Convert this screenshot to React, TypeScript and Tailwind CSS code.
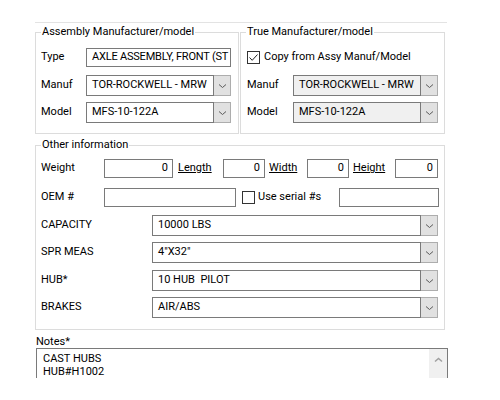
import React from "react";

const font = { fontFamily: "Roboto, 'Liberation Sans', sans-serif" };

function Chevron() {
  return (
    <svg width="9" height="6" viewBox="0 0 9 6" fill="none">
      <path d="M1 1.5 L4.5 4.5 L8 1.5" stroke="#5a5a5a" strokeWidth="1" />
    </svg>
  );
}

function TextBox({
  w,
  value = "",
  right = false,
}: {
  w: string;
  value?: string;
  right?: boolean;
}) {
  return (
    <div
      className={`${w} h-[19px] border border-[#7a7a7a] bg-white flex items-center pl-[5px] pr-[4px] overflow-hidden whitespace-pre ${
        right ? "justify-end" : ""
      }`}
    >
      {value}
    </div>
  );
}

function Combo({
  w,
  value,
  disabled = false,
}: {
  w: string;
  value: string;
  disabled?: boolean;
}) {
  return (
    <div className={`${w} h-[21px] flex`}>
      <div
        className={`flex-1 border border-[#7a7a7a] flex items-center pl-[5px] overflow-hidden whitespace-pre ${
          disabled ? "bg-[#f0f0f0]" : "bg-white"
        }`}
      >
        {value}
      </div>
      <div className="w-[17px] border border-l-0 border-[#adadad] bg-[#e1e1e1] flex items-center justify-center">
        <Chevron />
      </div>
    </div>
  );
}

function CheckBox({ checked = false }: { checked?: boolean }) {
  return (
    <div className="w-[13px] h-[13px] border border-[#333333] bg-white flex items-center justify-center">
      {checked && (
        <svg width="11" height="11" viewBox="0 0 11 11" fill="none">
          <path d="M1.5 5.5 L4.2 8.3 L9.5 2.5" stroke="#222" strokeWidth="1" />
        </svg>
      )}
    </div>
  );
}

function Legend({ text }: { text: string }) {
  return <legend className="ml-[5px] px-[1px] leading-[16px]">{text}</legend>;
}

export default function App() {
  const combos = [
    { label: "CAPACITY", value: "10000 LBS", mt: "mt-[8px]" },
    { label: "SPR MEAS", value: '4"X32"', mt: "mt-[6px]" },
    { label: "HUB*", value: "10 HUB  PILOT", mt: "mt-[7px]" },
    { label: "BRAKES", value: "AIR/ABS", mt: "mt-[6px]" },
  ];

  return (
    <div className="w-[500px] h-[400px] bg-white overflow-hidden text-[11px] text-black" style={font}>
      <div className="ml-[35px] mt-[22px] w-[412px] border-t border-[#e3e3e3]">
        <div className="mt-[1px] flex gap-[1px]">
          {/* Assembly manufacturer */}
          <fieldset className="w-[204px] border border-[#dcdcdc] pb-[10px]">
            <Legend text="Assembly Manufacturer/model" />
            <div className="mt-[8px] flex items-center">
              <span className="w-[50px] pl-[5px]">Type</span>
              <div className="w-[145px] h-[19px] border border-[#7a7a7a] bg-white flex items-center pl-[5px] whitespace-nowrap tracking-[-0.2px]">
                AXLE ASSEMBLY, FRONT (ST
              </div>
            </div>
            <div className="mt-[8px] flex items-center">
              <span className="w-[50px] pl-[5px]">Manuf</span>
              <Combo w="w-[145px]" value="TOR-ROCKWELL - MRW" />
            </div>
            <div className="mt-[6px] flex items-center">
              <span className="w-[50px] pl-[5px]">Model</span>
              <Combo w="w-[145px]" value="MFS-10-122A" />
            </div>
          </fieldset>

          {/* True manufacturer */}
          <fieldset className="w-[205px] border border-[#dcdcdc] pb-[10px]">
            <Legend text="True Manufacturer/model" />
            <div className="mt-[8px] h-[19px] flex items-center pl-[6px] gap-[4px]">
              <CheckBox checked />
              <span>Copy from Assy Manuf/Model</span>
            </div>
            <div className="mt-[8px] flex items-center">
              <span className="w-[52px] pl-[6px]">Manuf</span>
              <Combo w="w-[145px]" value="TOR-ROCKWELL - MRW" disabled />
            </div>
            <div className="mt-[6px] flex items-center">
              <span className="w-[52px] pl-[6px]">Model</span>
              <Combo w="w-[145px]" value="MFS-10-122A" disabled />
            </div>
          </fieldset>
        </div>

        {/* Other information */}
        <fieldset className="mt-[3px] w-[410px] border border-[#dcdcdc] pb-[11px]">
          <Legend text="Other information" />
          <div className="mt-[6px] flex items-center">
            <span className="w-[68px] pl-[5px]">Weight</span>
            <TextBox w="w-[69px]" value="0" right />
            <span className="w-[50px] pl-[5px] underline">Length</span>
            <TextBox w="w-[42px]" value="0" right />
            <span className="w-[42px] pl-[4px] underline">Width</span>
            <TextBox w="w-[42px]" value="0" right />
            <span className="w-[46px] pl-[4px] underline">Height</span>
            <TextBox w="w-[43px]" value="0" right />
          </div>
          <div className="mt-[10px] flex items-center">
            <span className="w-[68px] pl-[5px]">OEM #</span>
            <TextBox w="w-[132px]" />
            <div className="ml-[6px]">
              <CheckBox />
            </div>
            <span className="w-[84px] pl-[3px]">Use serial #s</span>
            <TextBox w="w-[100px]" />
          </div>
          {combos.map((c) => (
            <div key={c.label} className={`${c.mt} flex items-center`}>
              <span className="w-[116px] pl-[5px]">{c.label}</span>
              <Combo w="w-[286px]" value={c.value} />
            </div>
          ))}
        </fieldset>

        {/* Notes */}
        <div className="mt-[5px] ml-[1px] leading-[13px] h-[13px]">Notes*</div>
        <div className="ml-[1px] w-[412px] h-[30px] border border-b-0 border-[#7a7a7a] flex">
          <div className="flex-1 pl-[6px] pt-[3px] leading-[13px]">
            <div>CAST HUBS</div>
            <div>HUB#H1002</div>
          </div>
          <div className="w-[18px] bg-[#f0f0f0] flex justify-center pt-[8px]">
            <svg width="9" height="6" viewBox="0 0 9 6" fill="none">
              <path d="M1 4.5 L4.5 1.5 L8 4.5" stroke="#a0a0a0" strokeWidth="1.5" />
            </svg>
          </div>
        </div>
      </div>
    </div>
  );
}
